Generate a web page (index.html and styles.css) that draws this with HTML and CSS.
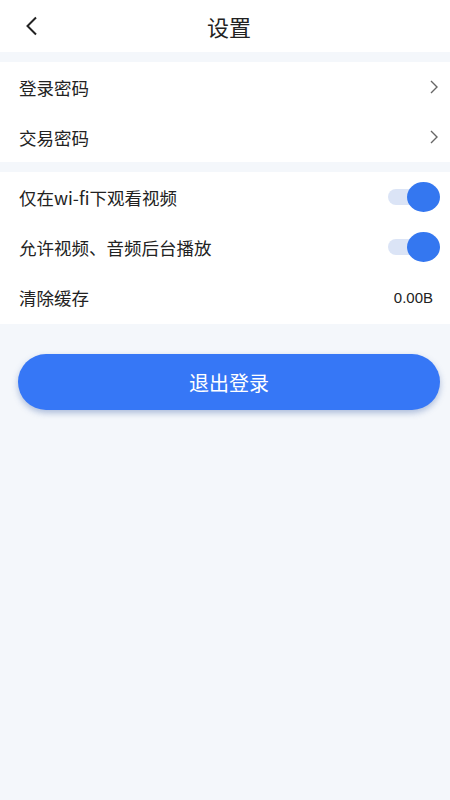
FILE: index.html
```html
<!DOCTYPE html>
<html lang="zh-CN">
<head>
  <meta charset="UTF-8">
  <meta name="viewport" content="width=device-width, initial-scale=1.0">
  <title>设置</title>
  <link rel="stylesheet" href="styles.css">
</head>
<body>
  <!-- Top bar -->
  <header class="topbar">
    <span class="back">
      <svg width="14" height="20" viewBox="0 0 14 20"><path d="M11 1.5 L2.5 10 L11 18.5" fill="none" stroke="#222" stroke-width="2"/></svg>
    </span>
    <h1 class="title">设置</h1>
  </header>

  <!-- Passwords -->
  <section class="group">
    <div class="row">
      <span class="label">登录密码</span>
      <svg class="arrow" width="10" height="16" viewBox="0 0 10 16"><path d="M2 2 L8 8 L2 14" fill="none" stroke="#666" stroke-width="1.4"/></svg>
    </div>
    <div class="row">
      <span class="label">交易密码</span>
      <svg class="arrow" width="10" height="16" viewBox="0 0 10 16"><path d="M2 2 L8 8 L2 14" fill="none" stroke="#666" stroke-width="1.4"/></svg>
    </div>
  </section>

  <!-- Playback and cache -->
  <section class="group group-last">
    <div class="row">
      <span class="label">仅在wi-fi下观看视频</span>
      <span class="switch on"><span class="knob"></span></span>
    </div>
    <div class="row">
      <span class="label">允许视频、音频后台播放</span>
      <span class="switch on"><span class="knob"></span></span>
    </div>
    <div class="row">
      <span class="label">清除缓存</span>
      <span class="value">0.00B</span>
    </div>
  </section>

  <div class="actions">
    <button class="logout">退出登录</button>
  </div>
</body>
</html>
```

FILE: styles.css
```css
body {
  margin: 0;
  padding: 0;
  min-height: 800px;
  background-color: #f4f7fb;
  font-family: "Noto Sans CJK SC", "Noto Sans", sans-serif;
  color: #222;
}

.topbar {
  position: relative;
  height: 52px;
  background-color: white;
  display: flex;
  align-items: center;
  justify-content: center;
}

.back {
  position: absolute;
  left: 25px;
  top: 16px;
  display: flex;
}

.title {
  margin: 0 0 0 8px;
  font-size: 22px;
  font-weight: normal;
  color: #222;
}

.group {
  background-color: white;
  margin-top: 10px;
}

.group-last {
  padding-bottom: 2px;
}

.row {
  height: 50px;
  display: flex;
  align-items: center;
  justify-content: space-between;
  padding: 0 10px 0 19px;
}

.label {
  font-size: 17.5px;
  color: #222;
}

.arrow {
  margin-right: 1px;
}

.switch {
  position: relative;
  width: 52px;
  height: 30px;
  display: flex;
  align-items: center;
}

.switch::before {
  content: "";
  display: block;
  width: 42px;
  height: 16px;
  border-radius: 8px;
  background-color: #dbe4f6;
}

.knob {
  position: absolute;
  right: 0;
  top: 0;
  width: 33px;
  height: 30px;
  border-radius: 50%;
  background-color: #3477f0;
}

.value {
  font-family: "Liberation Sans", sans-serif;
  font-size: 15px;
  color: #222;
  margin-right: 7px;
}

.actions {
  padding: 30px 10px 0 18px;
}

.logout {
  width: 100%;
  height: 56px;
  border: none;
  border-radius: 28px;
  background-color: #3677f6;
  color: white;
  font-family: "Noto Sans CJK SC", sans-serif;
  font-size: 20px;
  box-shadow: 0 3px 6px rgba(40, 80, 160, 0.35);
}
```
